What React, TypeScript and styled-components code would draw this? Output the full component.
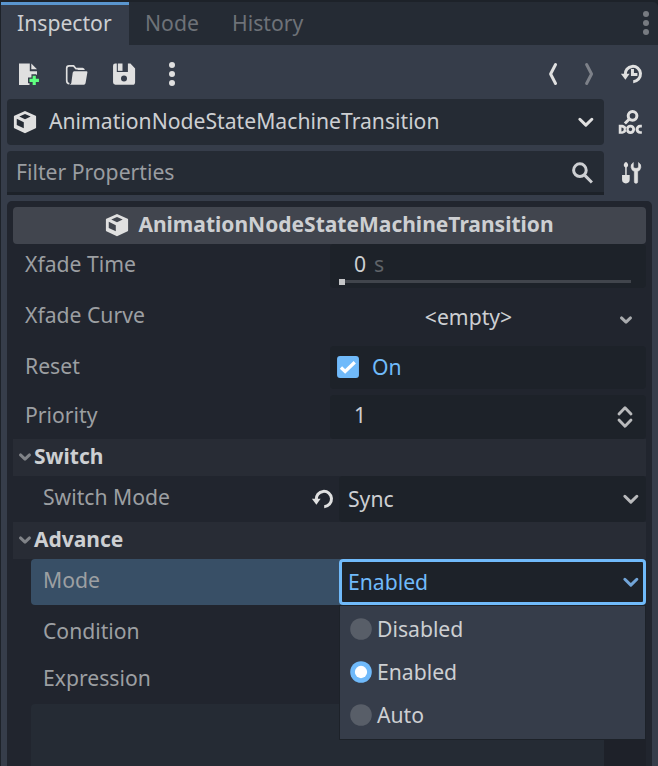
import React from 'react';
import styled, { createGlobalStyle } from 'styled-components';

const c = {
  base: '#363d4a',
  dark: '#252b34',
  darker: '#1d2229',
  section: '#21252e',
  category: '#41454e',
  group: '#282c35',
  accent: '#70bafa',
  icon: '#e0e0e0',
  text: '#cdcfd2',
};

const Global = createGlobalStyle`
  * { box-sizing: border-box; }
  body { margin: 0; background: ${c.darker}; overflow: hidden; }
`;

const Dock = styled.div`
  width: 658px;
  height: 766px;
  padding: 2px 0 0 1px;
  background: ${c.darker};
  font: 21.16px/30px 'Noto Sans', sans-serif;
  color: ${c.text};
  overflow: hidden;
  display: flex;
  flex-direction: column;
`;

const TabBar = styled.div`
  display: flex;
  flex: none;
  height: 43px;
  background: ${c.dark};
  border-top-right-radius: 5px;
`;

const Tab = styled.div<{ $active?: boolean; $width: number }>`
  width: ${p => p.$width}px;
  padding: ${p => (p.$active ? 3 : 6)}px 0 0 16px;
  color: ${p => (p.$active ? c.text : '#6e7278')};
  background: ${p => (p.$active ? c.base : 'transparent')};
  border-top: ${p => (p.$active ? '3px solid #5a96cf' : 'none')};
`;

const TabMenu = styled.div`
  margin-left: auto;
  width: 24px;
  padding-top: 9px;
`;

const Body = styled.div`
  flex: 1;
  min-height: 0;
  padding: 0 6px;
  background: ${c.base};
  display: flex;
  flex-direction: column;
`;

const Toolbar = styled.div`
  display: flex;
  align-items: center;
  flex: none;
  height: 54px;
  padding: 4px 8px 0 9px;
  gap: 24px;
`;

const NavGroup = styled.div`
  display: flex;
  margin-left: auto;
  gap: 12px;
`;

const HistorySlot = styled.div`
  display: flex;
  margin-left: -5px;
`;

const BarRow = styled.div`
  display: grid;
  grid-template-columns: 597px 24px;
  column-gap: 14px;
  align-items: center;
  flex: none;
  margin-bottom: 6px;
`;

const ObjectPicker = styled.div`
  display: flex;
  height: 46px;
  padding: 0 6px;
  background: ${c.dark};
  border-radius: 4px;
`;

const PickerText = styled.span`
  flex: 1;
  padding: 7px 0 0 12px;
`;

const IconSlot = styled.span<{ $top: number }>`
  display: block;
  padding-top: ${p => p.$top}px;
  height: 24px;
`;

const FilterBox = styled.div`
  display: flex;
  justify-content: space-between;
  height: 44px;
  padding: 6px 10px 0 9px;
  background: ${c.dark};
  color: #9a9da1;
  border-bottom: 3px solid ${c.darker};
  border-radius: 4px 4px 0 0;
`;

const Properties = styled.div`
  flex: 1;
  width: 645px;
  padding: 6px;
  background: ${c.section};
  border-radius: 5px 5px 0 0;
`;

const Category = styled.div`
  display: flex;
  justify-content: center;
  height: 37px;
  padding: 2px 0 0;
  gap: 9px;
  background: ${c.category};
  border-radius: 4px;
  font-size: 21px;
  font-weight: 700;
`;

const CategoryIcon = styled.span`
  padding-top: 4px;
`;

const Row = styled.div<{ $h: number; $gap?: number; $indent?: boolean; $selected?: boolean }>`
  position: relative;
  display: grid;
  grid-template-columns: ${p => (p.$indent ? '308px 307px' : '317px 316px')};
  height: ${p => p.$h}px;
  margin-bottom: ${p => p.$gap ?? 0}px;
  margin-left: ${p => (p.$indent ? 18 : 0)}px;
  background: ${p => (p.$selected ? '#384f66' : 'transparent')};
  border-radius: 4px;
`;

const Label = styled.div<{ $top: number }>`
  display: flex;
  justify-content: space-between;
  padding: ${p => p.$top}px 4px 0 12px;
  color: #9c9fa2;
`;

const RevertSlot = styled.span`
  padding-top: 5px;
`;

const Field = styled.div<{ $plain?: boolean; $pad: string; $focused?: boolean }>`
  display: flex;
  justify-content: space-between;
  padding: ${p => p.$pad};
  background: ${p => (p.$plain ? 'transparent' : c.darker)};
  border-radius: 4px;
  box-shadow: ${p => (p.$focused ? `inset 0 0 0 3px ${c.accent}` : 'none')};
  color: ${p => (p.$focused ? c.accent : c.text)};
`;

const SliderField = styled.div`
  padding: 5px 15px 0 9px;
  background: ${c.darker};
  border-radius: 4px;
`;

const SliderValue = styled.div`
  height: 30px;
  padding-left: 15px;
`;

const Suffix = styled.span`
  margin-left: 8px;
  color: #5f6368;
`;

const Track = styled.div`
  display: flex;
  align-items: center;
  height: 6px;
  &::before { content: ''; width: 6px; height: 6px; background: #c4c5c7; }
  &::after { content: ''; flex: 1; height: 3px; margin-top: -1px; background: #41454c; }
`;

const EmptyText = styled.span`
  flex: 1;
  padding-right: 10px;
  text-align: center;
`;

const CheckText = styled.span`
  flex: 1;
  padding-left: 12px;
  color: ${c.accent};
`;

const Group = styled.div`
  display: flex;
  height: 37px;
  padding: 2px 0 0 3px;
  background: ${c.group};
  font-size: 21px;
  font-weight: 700;
`;

const GroupArrow = styled.span`
  width: 18px;
  padding-top: 7px;
`;

const Popup = styled.div`
  position: absolute;
  z-index: 1;
  left: 308px;
  top: 46px;
  width: 307px;
  height: 135px;
  padding: 1px 0 0 9px;
  background: ${c.base};
  border: 1px solid ${c.darker};
`;

const Option = styled.div`
  display: flex;
  align-items: center;
  height: 43px;
  gap: 4px;
`;

const Expression = styled.div`
  display: grid;
  grid-template-columns: 573px 42px;
  height: 80px;
  margin-left: 18px;
`;

const ExpressionText = styled.div`
  background: ${c.dark};
  border-top-left-radius: 4px;
`;

const ExpressionSide = styled.div`
  background: #1e2129;
`;

const Svg = styled.svg`
  display: block;
  flex: none;
`;

type IconProps = { size?: number; children: React.ReactNode; color?: string };
const Icon = ({ size = 24, color = c.icon, children }: IconProps) => (
  <Svg width={size} height={size} viewBox="0 0 16 16" fill={color}>{children}</Svg>
);

const Kebab = ({ color = c.icon }: { color?: string }) => (
  <Icon color={color}><circle cx="8" cy="2" r="2" /><circle cx="8" cy="8" r="2" /><circle cx="8" cy="14" r="2" /></Icon>
);

const Cube = () => (
  <Icon>
    <path fillRule="evenodd" d="M8 .6 15.1 3.9Q15.4 4 15.4 4.4V11.6Q15.4 12 15.1 12.1L8 15.5.9 12.1Q.6 12 .6 11.6V4.4Q.6 4 .9 3.9zM8 2.6 4.2 4.4 8 6.2l3.8-1.8zM2.5 5.9V10L7.2 12.2V8.1z" />
  </Icon>
);

const Chevron = ({ color = c.icon }: { color?: string }) => (
  <Icon color="none">
    <path d="m3.9 6.2 4 3.9 4-3.9" stroke={color} strokeWidth="2" strokeLinecap="round" strokeLinejoin="round" />
  </Icon>
);

const SmallChevron = ({ color }: { color: string }) => (
  <Svg width="18" height="18" viewBox="0 0 12 12" fill="none">
    <path d="m3 4.6 3 2.8 3-2.8" stroke={color} strokeWidth="2" strokeLinecap="round" strokeLinejoin="round" />
  </Svg>
);

const Reload = ({ clock }: { clock?: boolean }) => (
  <Icon>
    <path d="M3.5 8.6A5.1 5.1 0 1 1 8.8 13.1" fill="none" stroke={c.icon} strokeWidth="2" />
    <path d="M.6 7.9h5.8L3.6 11.9z" />
    {clock && <path d="M7.3 4.7h2v2.6h2.3v2H7.3z" />}
  </Icon>
);

const Radio = ({ on }: { on?: boolean }) => (
  <Icon>
    <circle cx="8" cy="8" r="7.2" fill={on ? c.accent : '#585e68'} />
    {on && <circle cx="8" cy="8" r="4.1" fill="#fff" />}
  </Icon>
);

export default function App() {
  return (
    <Dock>
      <Global />
      <TabBar>
        <Tab $active $width={128}>Inspector</Tab>
        <Tab $width={87}>Node</Tab>
        <Tab $width={110}>History</Tab>
        <TabMenu><Kebab color="#777b81" /></TabMenu>
      </TabBar>
      <Body>
        <Toolbar>
          <Icon>
            <path d="M2 1h7.2v5.2H14v2.4h-.4V8.2h-3.3v2.2H8v3.7h1v1.2H2zM10.2 1v3.9H14z" />
            <path fill="#5fff80" d="M11.1 9.1h2.1v2.1h2.1v2.1h-2.1v2h-2.1v-2H9v-2.1h2.1z" />
          </Icon>
          <Icon>
            <path fill="none" stroke={c.icon} strokeWidth="1.1" strokeLinejoin="round" d="M3.6 14.5A2 2 0 0 1 1.8 12.6V4.2A1.6 1.6 0 0 1 3.4 2.6h3L8 4.5h4.4" />
            <path d="M6.8 6.1H15q.7 0 .6.8l-1.1 6.4a2 2 0 0 1-2 1.9H3.8q1-.4 1.1-1.4l.9-6.6q.1-1.1 1-1.1zM8.2 3.9h4.2q1.3.2 1.5 1.5H9.4z" />
          </Icon>
          <Icon>
            <path fillRule="evenodd" d="M2.2 1h1v5.6h7.4V1h1.7l3.1 3.3v9.2A1.7 1.7 0 0 1 13.7 15.2H2.3A1.7 1.7 0 0 1 .7 13.5v-11A1.5 1.5 0 0 1 2.2 1zM8 9a2 2 0 1 0 0 4 2 2 0 0 0 0-4z" />
            <path d="M3.9 1H7v4.9H3.9z" />
          </Icon>
          <Kebab />
          <NavGroup>
            <Icon><path d="M9.7 1.7 6.4 8l3.3 6.3" fill="none" stroke={c.icon} strokeWidth="2" strokeLinecap="round" strokeLinejoin="round" /></Icon>
            <Icon><path d="m6.4 1.7 3.3 6.3-3.3 6.3" fill="none" stroke="#7d8189" strokeWidth="2" strokeLinecap="round" strokeLinejoin="round" /></Icon>
          </NavGroup>
          <HistorySlot><Reload clock /></HistorySlot>
        </Toolbar>
        <BarRow>
          <ObjectPicker>
            <IconSlot $top={11}><Cube /></IconSlot>
            <PickerText>AnimationNodeStateMachineTransition</PickerText>
            <IconSlot $top={11}><Chevron /></IconSlot>
          </ObjectPicker>
          <Icon>
            <circle cx="9.7" cy="3.9" r="2.9" fill="none" stroke={c.icon} strokeWidth="2" />
            <path d="m7.6 6-3 3" stroke={c.icon} strokeWidth="2" />
            <path fillRule="evenodd" transform="translate(.3 .1)" d="M.2 9.8h1.5c2.2 0 3.7 1 3.7 3s-1.5 3-3.7 3H.2zM2 11.5v2.7c1-.1 1.5-.5 1.5-1.4S3 11.6 2 11.5zM8 9.7a3.1 3.1 0 1 1 0 6.2 3.1 3.1 0 0 1 0-6.2zm0 1.9a1.2 1.2 0 1 0 0 2.4 1.2 1.2 0 0 0 0-2.4zM15.6 9.8h-1.2a3 3 0 0 0 0 6h1.2V14h-1a1.2 1.2 0 0 1 0-2.4h1z" />
          </Icon>
        </BarRow>
        <BarRow>
          <FilterBox>
            <span>Filter Properties</span>
            <IconSlot $top={4}>
              <Icon color="none"><path d="m9.8 9.4 4.7 4.7M6.5 1.7a4.2 4.2 0 1 1 0 8.4 4.2 4.2 0 0 1 0-8.4z" transform="translate(.1 .2)" stroke="#cdcfd2" strokeWidth="2" /></Icon>
            </IconSlot>
          </FilterBox>
          <Icon>
            <path d="M4.7.9h1.2l.8 1.2v1.3l-.9 1v4.9h2v3.1a2.55 2.55 0 0 1-5.1 0V9.3h2.1V4.4l-.9-1V2.1z" />
            <path d="M10.2 1v3.2l1.1.7h1.4l1-.7V1a3.4 3.4 0 0 1-.6 6v6.8a1.1 1.1 0 0 1-2.2 0V7a3.4 3.4 0 0 1-.7-6z" stroke={c.icon} strokeWidth=".4" />
          </Icon>
        </BarRow>
        <Properties>
          <Category><CategoryIcon><Cube /></CategoryIcon>AnimationNodeStateMachineTransition</Category>
          <Row $h={44} $gap={6}>
            <Label $top={5}>Xfade Time</Label>
            <SliderField>
              <SliderValue>0<Suffix>s</Suffix></SliderValue>
              <Track />
            </SliderField>
          </Row>
          <Row $h={46} $gap={6}>
            <Label $top={6}>Xfade Curve</Label>
            <Field $plain $pad="8px 11px 0 0"><EmptyText>&lt;empty&gt;</EmptyText><IconSlot $top={9}><SmallChevron color="#a9abae" /></IconSlot></Field>
          </Row>
          <Row $h={43} $gap={6}>
            <Label $top={5}>Reset</Label>
            <Field $pad="6px 0 0 6px">
              <IconSlot $top={3}>
                <Icon>
                  <rect x=".7" y=".7" width="14.6" height="14.6" rx="2" fill={c.accent} />
                  <path d="m3.3 8.3 2.8 2.7 6.4-6.2" fill="none" stroke="#fff" strokeWidth="2.2" />
                </Icon>
              </IconSlot>
              <CheckText>On</CheckText>
            </Field>
          </Row>
          <Row $h={44}>
            <Label $top={5}>Priority</Label>
            <Field $pad="5px 9px 0 24px">
              <span>1</span>
              <IconSlot $top={5}>
                <Icon color="none"><path d="m4 6 4-4.2L12 6M4 10l4 4.2 4-4.2" stroke="#b9babc" strokeWidth="1.9" strokeLinecap="round" strokeLinejoin="round" /></Icon>
              </IconSlot>
            </Field>
          </Row>
          <Group><GroupArrow><SmallChevron color="#808388" /></GroupArrow>Switch</Group>
          <Row $h={46} $indent>
            <Label $top={6}>Switch Mode<RevertSlot><Reload /></RevertSlot></Label>
            <Field $pad="8px 3px 0 9px"><span>Sync</span><IconSlot $top={3}><Chevron color="#b9babc" /></IconSlot></Field>
          </Row>
          <Group><GroupArrow><SmallChevron color="#808388" /></GroupArrow>Advance</Group>
          <Row $h={46} $gap={6} $indent $selected>
            <Label $top={6}>Mode</Label>
            <Field $focused $pad="8px 3px 0 9px"><span>Enabled</span><IconSlot $top={3}><Chevron color="#72a5d8" /></IconSlot></Field>
            <Popup>
              <Option><Radio />Disabled</Option>
              <Option><Radio on />Enabled</Option>
              <Option><Radio />Auto</Option>
            </Popup>
          </Row>
          <Row $h={46} $gap={6} $indent><Label $top={5}>Condition</Label></Row>
          <Row $h={41} $indent><Label $top={0}>Expression</Label></Row>
          <Expression><ExpressionText /><ExpressionSide /></Expression>
        </Properties>
      </Body>
    </Dock>
  );
}
